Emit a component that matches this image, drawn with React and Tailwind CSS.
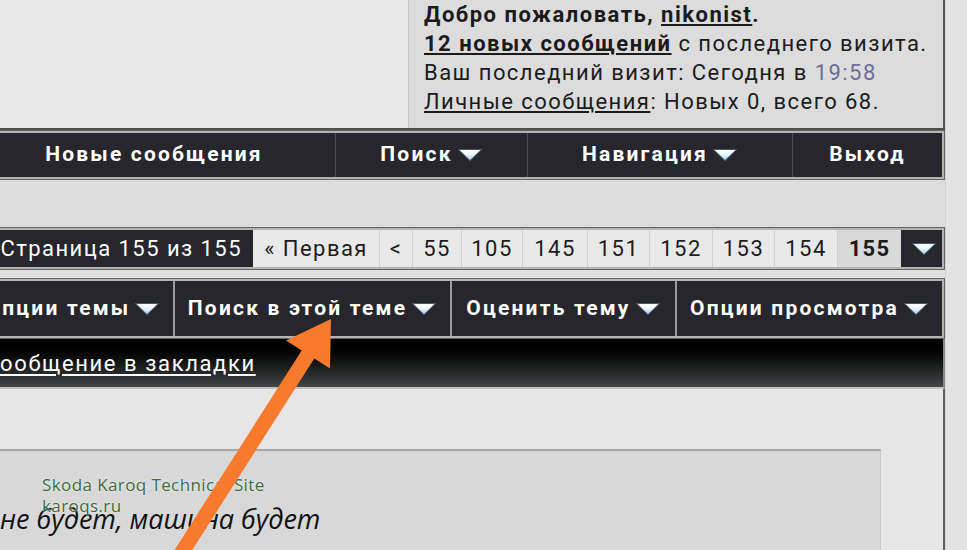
import React from 'react';

const Tri = () => (
  <svg width="26" height="14" viewBox="0 0 26 14" className="inline-block ml-[4px] shrink-0">
    <defs>
      <linearGradient id="tg" x1="0" y1="0" x2="0" y2="1">
        <stop offset="0" stopColor="#ffffff" />
        <stop offset="0.5" stopColor="#eaf4fd" />
        <stop offset="1" stopColor="#a8cdec" />
      </linearGradient>
    </defs>
    <polygon points="0.5,1 25.5,1 13,13.5" fill="#56789a" opacity="0.6" />
    <polygon points="2.5,2 23.5,2 13,12" fill="url(#tg)" />
  </svg>
);

const Frame = ({ children, className = '' }) => (
  <div className="ml-[-30px] w-[975px] border border-[#646464]">
    <div className={`border-2 border-[#b3b3b3] bg-[#26262c] flex ${className}`}>{children}</div>
  </div>
);

const pages = [
  { t: '« Первая', w: 'w-[127px]' },
  { t: '<', w: 'w-[33px]' },
  { t: '55', w: 'w-[49px]' },
  { t: '105', w: 'w-[61px]' },
  { t: '145', w: 'w-[65px]' },
  { t: '151', w: 'w-[62px]' },
  { t: '152', w: 'w-[63px]' },
  { t: '153', w: 'w-[62px]' },
  { t: '154', w: 'w-[63px]' },
];

const tools = [
  { t: 'Опции темы', w: 'w-[202px]' },
  { t: 'Поиск в этой теме', w: 'w-[277px]' },
  { t: 'Оценить тему', w: 'w-[225px]' },
  { t: 'Опции просмотра', w: 'flex-1' },
];

export default function App() {
  return (
    <div className="relative w-[967px] h-[550px] overflow-hidden bg-[#e3e3e3] flex font-['Roboto',sans-serif]">
      <div className="w-[945px] shrink-0 flex flex-col bg-[#dcdcdc]">
        {/* header */}
        <div className="h-[130px] shrink-0 flex border-b-2 border-[#4e4e4e]">
          <div className="w-[408px] bg-[#e8e8e8]" />
          <div className="flex-1 bg-[#dcdcdc] border-l border-[#c6c6c6] border-r-2 border-r-[#555] pl-[15px] text-[22px] leading-[29px] tracking-[1.45px] text-[#1b1b1b]">
            <p className="font-bold tracking-[1.5px]">
              Добро пожаловать, <span className="underline underline-offset-2">nikonist</span>.
            </p>
            <p>
              <span className="font-bold tracking-[1.5px] underline underline-offset-2">12 новых сообщений</span> с последнего визита.
            </p>
            <p>
              Ваш последний визит: Сегодня в <span className="text-[#6d6d99]">19:58</span>
            </p>
            <p>
              <span className="underline underline-offset-2">Личные сообщения</span>: Новых 0, всего 68.
            </p>
          </div>
        </div>

        {/* main nav */}
        <Frame className="h-[48px] text-white font-bold text-[21px] tracking-[2.2px]">
          <div className="w-[363px] flex items-center justify-center border-r border-[#4a4a50]">Новые сообщения</div>
          <div className="w-[192px] flex items-center justify-center border-r border-[#4a4a50]">
            Поиск<Tri />
          </div>
          <div className="w-[265px] flex items-center justify-center border-r border-[#4a4a50]">
            Навигация<Tri />
          </div>
          <div className="flex-1 flex items-center justify-center">Выход</div>
        </Frame>

        <div className="h-[47px] shrink-0" />

        {/* pagination */}
        <Frame className="h-[41px] text-[22px] tracking-[1.45px]">
          <div className="w-[280px] flex items-center justify-end pr-[11px] text-white">Страница 155 из 155</div>
          {pages.map((p) => (
            <div key={p.t} className={`${p.w} flex items-center justify-center bg-[#e9e9e9] border-r border-[#cfcfcf] text-[#1c1c1c]`}>
              {p.t}
            </div>
          ))}
          <div className="w-[63px] flex items-center justify-center bg-[#dadada] text-[#1c1c1c] font-bold tracking-[1.2px]">155</div>
          <div className="flex-1 flex items-center justify-center">
            <Tri />
          </div>
        </Frame>

        <div className="h-[8px] shrink-0 bg-[#e0e0e0]" />

        {/* thread tools */}
        <Frame className="h-[59px] text-white font-bold text-[21px] tracking-[2.2px]">
          {tools.map((t, i) => (
            <div
              key={t.t}
              className={`${t.w} flex items-center justify-center ${i < 3 ? 'border-r-2 border-[#9c9c9c]' : ''}`}
            >
              {t.t}
              <Tri />
            </div>
          ))}
        </Frame>

        {/* bookmark bar */}
        <div className="h-[50px] shrink-0 bg-gradient-to-b from-[#000000] via-[#111212] via-45% to-[#434747] border-b-2 border-[#c2c2c2] border-r-2 border-r-[#888] flex items-center">
          <span className="ml-[-13px] text-white text-[22px] tracking-[1.6px] underline underline-offset-[3px]">сообщение в закладки</span>
        </div>

        {/* content */}
        <div className="flex-1 bg-[#e6e6e6] border-r-2 border-[#5f5f5f] pt-[60px]">
          <div className="relative w-[881px] h-full bg-[#d8d8d8] border-t-2 border-[#a7a7a7] border-r border-r-[#c9c9c9] pt-[52px]">
            <p className="font-['Open_Sans',sans-serif] italic text-[27px] leading-[32px] text-[#111]">не будет, машина будет</p>
            <div className="absolute left-[42px] top-[23px] font-['Open_Sans',sans-serif] text-[17px] leading-[21px] tracking-[0.4px] text-[#3c6a3c] [text-shadow:0_0_2px_#fff]">
              <p>Skoda Karoq Technical Site</p>
              <p>karoqs.ru</p>
            </div>
          </div>
        </div>
      </div>
      <div className="flex-1 bg-[#e3e3e3] border-l border-[#d2d2d2]" />

      {/* orange arrow */}
      <svg className="absolute left-0 top-0 pointer-events-none" width="967" height="550" viewBox="0 0 967 550">
        <polygon
          points="331,319 330,368.5 314.3,358.5 183.3,564 170.7,556 301.7,350.5 286,340.5"
          fill="#f97a2c"
        />
      </svg>
    </div>
  );
}
